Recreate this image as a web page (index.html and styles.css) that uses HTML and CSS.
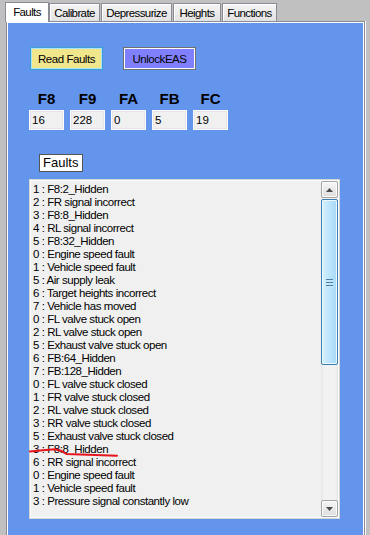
FILE: index.html
```html
<!DOCTYPE html>
<html lang="en">
<head>
    <meta charset="UTF-8">
    <meta name="viewport" content="width=device-width, initial-scale=1.0">
    <title>EAS Faults</title>
    <link rel="stylesheet" href="styles.css">
</head>
<body>
<div class="tabs">
    <div class="tab selected tab-faults">Faults</div>
    <div class="tab tab-calibrate">Calibrate</div>
    <div class="tab tab-depress">Depressurize</div>
    <div class="tab tab-heights">Heights</div>
    <div class="tab tab-functions">Functions</div>
</div>
<div class="panel">
    <div class="client">
        <div class="actions">
            <button class="btn btn-read">Read Faults</button>
            <button class="btn btn-unlock">UnlockEAS</button>
        </div>
        <div class="regs">
            <div class="reg"><span class="reg-name">F8</span><div class="reg-box">16</div></div>
            <div class="reg"><span class="reg-name">F9</span><div class="reg-box">228</div></div>
            <div class="reg"><span class="reg-name">FA</span><div class="reg-box">0</div></div>
            <div class="reg"><span class="reg-name">FB</span><div class="reg-box">5</div></div>
            <div class="reg"><span class="reg-name">FC</span><div class="reg-box">19</div></div>
        </div>
        <div class="list-title">Faults</div>
        <div class="listbox">
            <ul class="items">
                <li>1 : F8:2_Hidden</li>
                <li>2 : FR signal incorrect</li>
                <li>3 : F8:8_Hidden</li>
                <li>4 : RL signal incorrect</li>
                <li>5 : F8:32_Hidden</li>
                <li>0 : Engine speed fault</li>
                <li>1 : Vehicle speed fault</li>
                <li>5 : Air supply leak</li>
                <li>6 : Target heights incorrect</li>
                <li>7 : Vehicle has moved</li>
                <li>0 : FL valve stuck open</li>
                <li>2 : RL valve stuck open</li>
                <li>5 : Exhaust valve stuck open</li>
                <li>6 : FB:64_Hidden</li>
                <li>7 : FB:128_Hidden</li>
                <li>0 : FL valve stuck closed</li>
                <li>1 : FR valve stuck closed</li>
                <li>2 : RL valve stuck closed</li>
                <li>3 : RR valve stuck closed</li>
                <li>5 : Exhaust valve stuck closed</li>
                <li>3 : F8:8_Hidden</li>
                <li>6 : RR signal incorrect</li>
                <li>0 : Engine speed fault</li>
                <li>1 : Vehicle speed fault</li>
                <li>3 : Pressure signal constantly low</li>
            </ul>
            <div class="scrollbar">
                <div class="sb-btn">
                    <svg width="7" height="4" viewBox="0 0 7 4"><path d="M3.5 0 L7 4 L0 4 Z" fill="#4d4d4d"/></svg>
                </div>
                <div class="sb-track">
                    <div class="sb-thumb">
                        <div class="grip"><i></i><i></i><i></i></div>
                    </div>
                </div>
                <div class="sb-btn">
                    <svg width="7" height="4" viewBox="0 0 7 4"><path d="M0 0 L7 0 L3.5 4 Z" fill="#4d4d4d"/></svg>
                </div>
            </div>
        </div>
    </div>
</div>
<!-- hand drawn mark under the repeated F8:8 entry -->
<svg class="mark" width="95" height="14" viewBox="0 0 95 14">
    <path d="M2 6.5 Q15 5 27 4.3 Q33 5 38.5 9 L89 10.7" fill="none" stroke="#e8141c" stroke-width="2" stroke-linecap="round"/>
</svg>
</body>
</html>
```

FILE: styles.css
```css
body {
    margin: 0;
    width: 370px;
    height: 535px;
    overflow: hidden;
    background-color: #c0c0c0;
    font-family: 'Liberation Sans', Arial, sans-serif;
    font-size: 11px;
    color: #000;
    position: relative;
}
.tabs {
    display: flex;
    align-items: flex-end;
    height: 21px;
    padding-left: 5px;
}
.tab {
    box-sizing: border-box;
    height: 18px;
    border: 1px solid #898c95;
    border-bottom: none;
    background: linear-gradient(#f5f5f5, #e2e2e2);
    box-shadow: inset 1px 1px 0 #fff;
    display: flex;
    align-items: center;
    justify-content: center;
    font-size: 11.5px;
    letter-spacing: -0.6px;
}
.tab.selected {
    height: 20px;
    background: #fff;
    margin-bottom: -1px;
    position: relative;
    z-index: 1;
    padding-bottom: 2px;
    box-shadow: none;
}
.tab-faults { width: 44px; }
.tab-calibrate { width: 51px; }
.tab-depress { width: 71px; margin-left: 1px; }
.tab-heights { width: 48px; margin-left: 1px; }
.tab-functions { width: 55px; margin-left: 1px; }
.panel {
    box-sizing: border-box;
    margin-left: 6px;
    width: 359px;
    height: 514px;
    border: 1px solid #898c95;
    border-bottom: none;
    background-color: #fff;
    padding: 1px 1px 0 1px;
    box-shadow: 1px 0 0 #fff;
}
.client {
    height: 100%;
    background-color: #6495ed;
    padding-top: 24px;
    box-sizing: border-box;
}
.actions {
    display: flex;
    gap: 20px;
    margin-left: 22px;
}
.btn {
    width: 73px;
    height: 23px;
    padding: 0;
    font-family: inherit;
    font-size: 11.5px;
    letter-spacing: -0.45px;
    color: #000;
    cursor: pointer;
}
.btn-read {
    background-color: #f0e68c;
    border: 1px solid #3c9fd8;
    box-shadow: inset 0 0 0 1px #a9e3f8;
}
.btn-unlock {
    background-color: #8080ff;
    border: 1px solid #707070;
    box-shadow: inset 0 0 0 1px #fff;
}
.regs {
    display: flex;
    gap: 6px;
    margin: 20px 0 0 21px;
}
.reg {
    width: 35px;
    display: flex;
    flex-direction: column;
    align-items: center;
}
.reg-name {
    font-weight: bold;
    font-size: 15px;
    line-height: 17px;
    margin-bottom: 3px;
}
.reg-box {
    box-sizing: border-box;
    width: 35px;
    height: 20px;
    line-height: 18px;
    padding-left: 2px;
    font-size: 11.5px;
    background-color: #f0f0f0;
    border: 1px solid #fbfbfb;
    box-shadow: inset 0 0 0 1px #e6e6e6;
    align-self: stretch;
}
.list-title {
    box-sizing: border-box;
    display: inline-block;
    margin: 24px 0 0 31px;
    width: 44px;
    height: 18px;
    line-height: 16px;
    padding-left: 3px;
    font-size: 13px;
    background-color: #fff;
    border: 1px solid #555;
}
.listbox {
    box-sizing: border-box;
    display: flex;
    margin: 7px 0 0 21px;
    width: 311px;
    height: 340px;
    border: 1px solid #d5d5d5;
    box-shadow: inset 0 0 0 1px #fff;
    padding: 1px;
    background-color: #f0f0f0;
}
.items {
    flex: 1;
    list-style: none;
    margin: 0;
    padding: 2px 0 0 2px;
    overflow: hidden;
}
.items li {
    height: 13px;
    line-height: 13px;
    white-space: nowrap;
    font-size: 11.5px;
    letter-spacing: -0.45px;
}
.scrollbar {
    width: 17px;
    display: flex;
    flex-direction: column;
    background: linear-gradient(90deg, #e6e6e6, #f2f2f2 3px, #f2f2f2 14px, #e6e6e6);
}
.sb-btn {
    box-sizing: border-box;
    height: 17px;
    border: 1px solid #a4a4a4;
    border-radius: 2px;
    background: linear-gradient(#f6f6f6, #dedede);
    box-shadow: inset 0 0 0 1px #fcfcfc;
    display: flex;
    align-items: center;
    justify-content: center;
}
.sb-track {
    flex: 1;
}
.sb-thumb {
    box-sizing: border-box;
    margin: 1px 0 0 0;
    height: 166px;
    border: 1px solid #3c7fb1;
    border-radius: 2px;
    background: linear-gradient(90deg, #d9f0fc, #bee6fd 45%, #a7d9f5);
    box-shadow: inset 0 0 0 1px #ecf8fe;
    display: flex;
    align-items: center;
    justify-content: center;
    padding-top: 2px;
}
.grip {
    display: flex;
    flex-direction: column;
    gap: 1px;
}
.grip i {
    display: block;
    width: 7px;
    height: 2px;
    background-color: #4a7ea8;
    border-bottom: 1px solid #cde9f8;
    box-sizing: border-box;
}
.mark {
    position: absolute;
    left: 28px;
    top: 445px;
}
```
